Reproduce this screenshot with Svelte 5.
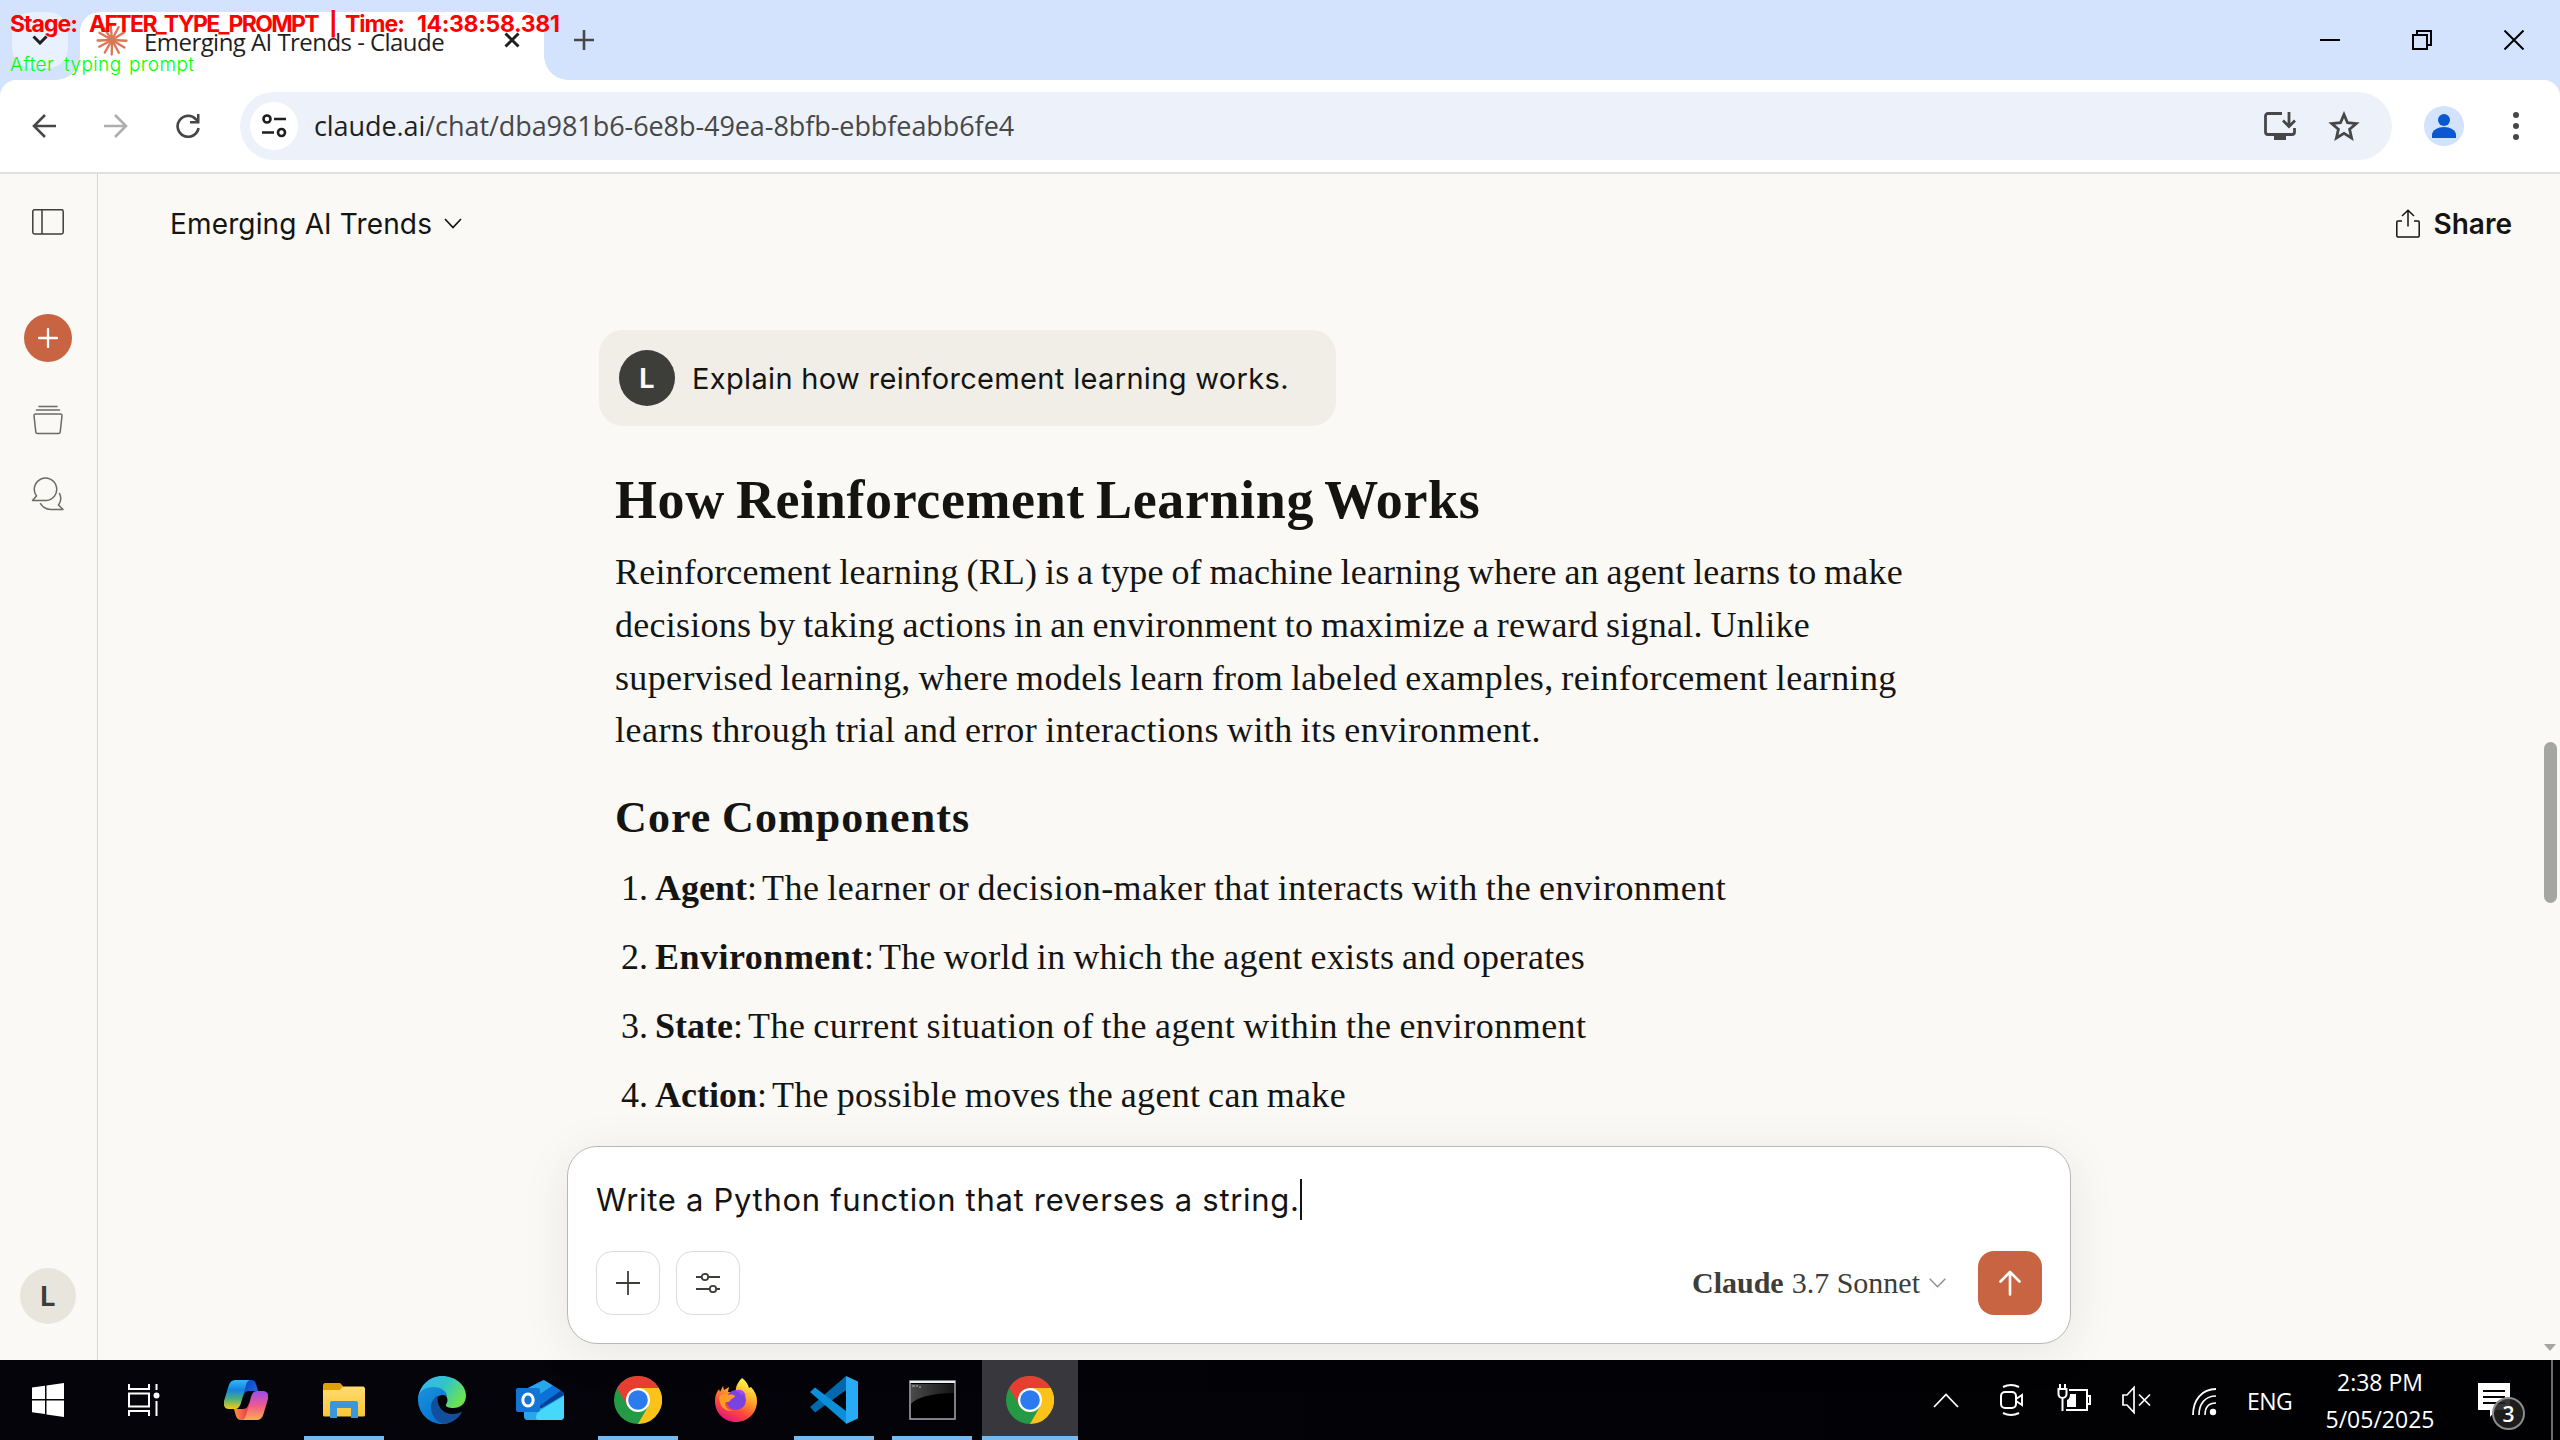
<script>
  const paragraph = [
    'Reinforcement learning (RL) is a type of machine learning where an agent learns to make',
    'decisions by taking actions in an environment to maximize a reward signal. Unlike',
    'supervised learning, where models learn from labeled examples, reinforcement learning',
    'learns through trial and error interactions with its environment.'
  ];
  const components = [
    { term: 'Agent', text: 'The learner or decision-maker that interacts with the environment' },
    { term: 'Environment', text: 'The world in which the agent exists and operates' },
    { term: 'State', text: 'The current situation of the agent within the environment' },
    { term: 'Action', text: 'The possible moves the agent can make' }
  ];
  const rays = [3, 31, 62, 91, 120, 152, 178, 210, 236, 265, 297, 328].map((d) => (d * Math.PI) / 180);
</script>

{#snippet chrome()}
  <svg class="app-icon" viewBox="0 0 48 48">
    <circle cx="24" cy="24" r="24" fill="#249a45" />
    <path d="M24 24 3.200 12A24 24 0 0 1 44.800 12Z" fill="#e63e31" />
    <path d="M24 12H44.800A24 24 0 0 1 24 48L34.400 30Z" fill="#fdc21a" />
    <path d="M3.200 12 13.600 30 24 24V12Z" fill="#e63e31" />
    <circle cx="24" cy="24" r="12" fill="#fff" />
    <circle cx="24" cy="24" r="9.800" fill="#2b7aee" />
  </svg>
{/snippet}

<div class="screen">
  <div class="tabstrip">
    <div class="tab-search">
      <svg width="16" height="10" viewBox="0 0 16 10"><path d="M1.500 1.500 8 8l6.500-6.500" fill="none" stroke="#1f1f1f" stroke-width="3" /></svg>
    </div>
    <div class="tab">
      <svg class="spark" width="32" height="32" viewBox="-16 -16 32 32">
        <g stroke="#d97757" stroke-width="2.300" stroke-linecap="round">
          {#each rays as a}
            <line x1="0" y1="0" x2={14.5 * Math.cos(a)} y2={14.5 * Math.sin(a)} />
          {/each}
        </g>
        <circle r="4.500" fill="#d97757" />
      </svg>
      <span class="tab-title">Emerging AI Trends - Claude</span>
      <svg class="tab-close" width="16" height="16" viewBox="0 0 16 16"><path d="M1.500 1.500l13 13M14.500 1.500l-13 13" stroke="#1f1f1f" stroke-width="3" /></svg>
    </div>
    <svg class="new-tab" width="20" height="20" viewBox="0 0 20 20"><path d="M10 0v20M0 10h20" stroke="#474747" stroke-width="2.600" /></svg>
    <div class="window-controls">
      <svg width="20" height="20" viewBox="0 0 20 20"><path d="M0 10h20" stroke="#000" stroke-width="2" /></svg>
      <svg width="20" height="20" viewBox="0 0 20 20"><path d="M1 5h14v14H1zM5 5V1h14v14h-4" fill="none" stroke="#000" stroke-width="2" /></svg>
      <svg width="20" height="20" viewBox="0 0 20 20"><path d="M.5.5l19 19M19.500.5l-19 19" stroke="#000" stroke-width="2" /></svg>
    </div>
  </div>

  <div class="toolbar-wrap">
    <div class="toolbar">
      <svg class="nav" width="24" height="24" viewBox="0 0 24 24"><path d="M13 1 2 12l11 11M2 12h22" fill="none" stroke="#474747" stroke-width="2.600" /></svg>
      <svg class="nav" width="24" height="24" viewBox="0 0 24 24"><path d="M11 1l11 11-11 11M22 12H0" fill="none" stroke="#aeaeae" stroke-width="2.600" /></svg>
      <svg class="nav" width="24" height="24" viewBox="0 0 24 24"><path d="M22.500 14A10.500 10.500 0 1 1 20 5.300L22 8" fill="none" stroke="#474747" stroke-width="2.700" /><path d="M23.500 0v9.500H14V7h7V0z" fill="#474747" /></svg>
      <div class="omnibox">
        <div class="site-info">
          <svg width="26" height="24" viewBox="0 0 26 24"><g fill="none" stroke="#1f1f1f" stroke-width="2.600"><circle cx="6" cy="5" r="3.500" /><path d="M13 5h12M1 18.500h12" /><circle cx="20.500" cy="18.500" r="3.500" /></g></svg>
        </div>
        <span class="url"><b>claude.ai</b>/chat/dba981b6-6e8b-49ea-8bfb-ebbfeabb6fe4</span>
        <svg class="install" width="32" height="28" viewBox="0 0 32 28"><path d="M18 1.500H4A2.500 2.500 0 0 0 1.500 4v16A2.500 2.500 0 0 0 4 22.500h24a2.500 2.500 0 0 0 2.500-2.500v-4M25 0v14M19 8.500l6 6 6-6" fill="none" stroke="#474747" stroke-width="2.800" /><path d="M10 22h12v6H10z" fill="#474747" /></svg>
        <svg class="star" width="32" height="30" viewBox="0 0 32 30"><path d="M16 3.500l3.500 8.200 8.800.8-6.700 5.800 2 8.700-7.600-4.600-7.600 4.600 2-8.700-6.700-5.800 8.800-.8z" fill="none" stroke="#474747" stroke-width="2.800" /></svg>
      </div>
      <svg class="profile" width="40" height="40" viewBox="0 0 40 40"><circle cx="20" cy="20" r="20" fill="#d3e3fd" /><circle cx="20" cy="14" r="6" fill="#0b57d0" /><path d="M8 32v-3c0-5 6-8 12-8s12 3 12 8v3z" fill="#0b57d0" /></svg>
      <svg class="dots" width="8" height="30" viewBox="0 0 8 30"><circle cx="4" cy="4" r="3" /><circle cx="4" cy="15" r="3" /><circle cx="4" cy="26" r="3" /></svg>
    </div>
  </div>

  <div class="page">
    <nav class="sidebar">
      <svg class="panel" width="32" height="26" viewBox="0 0 32 26"><path d="M2.500.8h27a1.700 1.700 0 0 1 1.700 1.700v20.800a1.700 1.700 0 0 1-1.700 1.700h-27a1.700 1.700 0 0 1-1.700-1.700V2.500A1.700 1.700 0 0 1 2.500.8zM10 .8V25" fill="none" stroke="#3d3d3a" stroke-width="1.500" /></svg>
      <div class="new-chat"><svg width="20" height="20" viewBox="0 0 20 20"><path d="M10 1v18M1 10h18" stroke="#fff" stroke-width="2.300" stroke-linecap="round" /></svg></div>
      <svg class="projects" width="30" height="30" viewBox="0 0 30 30"><path d="M6 1.500h18M3.500 5h23M2.500 9h25a1.500 1.500 0 0 1 1.500 1.700l-1.800 16.400A1.800 1.800 0 0 1 25.500 28.500h-21A1.800 1.800 0 0 1 2.800 27.100L1 10.700A1.500 1.500 0 0 1 2.500 9z" fill="none" stroke="#6b6a65" stroke-width="1.500" stroke-linecap="round" /></svg>
      <svg class="chats" width="34" height="34" viewBox="0 0 34 34"><path d="M1.500 23.500 5.500 19A11.200 11.200 0 1 1 15.300 23.500zM28.500 16.500c2 4 1.500 8-1 11.500l4.500 4.500H20c-4.500 0-8-2-10.500-5.800" fill="none" stroke="#6b6a65" stroke-width="1.500" stroke-linejoin="round" stroke-linecap="round" /></svg>
      <div class="avatar account">L</div>
    </nav>

    <main>
      <header>
        <span class="title">Emerging AI Trends</span>
        <svg class="title-chevron" width="18" height="11" viewBox="0 0 18 11"><path d="M1 1l8 8.500L17 1" fill="none" stroke="#141413" stroke-width="1.700" /></svg>
        <svg class="share-icon" width="24" height="29" viewBox="0 0 24 29"><path d="M6 12H2a1.200 1.200 0 0 0-1.200 1.200v13.600A1.200 1.200 0 0 0 2 28h20a1.200 1.200 0 0 0 1.200-1.200V13.200A1.200 1.200 0 0 0 22 12h-4M12 17.500V1.500M6 7l6-5.700L18 7" fill="none" stroke="#141413" stroke-width="1.500" /></svg>
        <span class="share">Share</span>
      </header>

      <section class="thread">
        <div class="bubble">
          <div class="avatar user">L</div>
          <span class="question">Explain how reinforcement learning works.</span>
        </div>
        <article>
          <h2>How Reinforcement Learning Works</h2>
          <p>{#each paragraph as line}<span>{line}</span>{/each}</p>
          <h3>Core Components</h3>
          <ol>
            {#each components as c, i}
              <li><span class="num">{i + 1}.</span><b>{c.term}</b><span class="colon">:</span><span class="desc">{c.text}</span></li>
            {/each}
          </ol>
        </article>
      </section>

      <div class="composer">
        <div class="prompt"><span>Write a Python function that reverses a string.</span><i class="caret"></i></div>
        <div class="actions">
          <div class="tool"><svg width="24" height="24" viewBox="0 0 24 24"><path d="M12 0v24M0 12h24" stroke="#3d3d3a" stroke-width="1.800" /></svg></div>
          <div class="tool"><svg width="24" height="20" viewBox="0 0 24 20"><g fill="none" stroke="#3d3d3a" stroke-width="1.800"><path d="M0 4h5.500M12.500 4H24M0 16h13.500M20.500 16H24" /><circle cx="9" cy="4" r="3.200" /><circle cx="17" cy="16" r="3.200" /></g></svg></div>
          <div class="model"><b>Claude</b><span>3.7 Sonnet</span></div>
          <svg class="model-chevron" width="17" height="10" viewBox="0 0 17 10"><path d="M.7.8l7.800 8L16.300.8" fill="none" stroke="#8f8e88" stroke-width="1.400" /></svg>
          <div class="send"><svg width="22" height="26" viewBox="0 0 22 26"><path d="M11 24.500V2M1.500 11.500 11 2l9.500 9.500" fill="none" stroke="#fff" stroke-width="2.600" stroke-linecap="round" stroke-linejoin="round" /></svg></div>
        </div>
      </div>
    </main>

    <div class="scrollbar">
      <div class="thumb"></div>
      <svg width="12" height="7" viewBox="0 0 12 7"><path d="M0 0h12L6 7z" fill="#a5a5a2" /></svg>
    </div>
  </div>

  <footer class="taskbar">
    <div class="slot start"><svg width="32" height="34" viewBox="0 0 32 34"><path d="M0 4.600 13 2.800V16H0zM14.500 2.600 32 0v16H14.500zM0 17.500h13v13.400L0 29.200zM14.500 17.500H32V34l-17.500-2.600z" fill="#fff" /></svg></div>
    <div class="slot view"><svg width="32" height="32" viewBox="0 0 32 32"><g fill="none" stroke="#fff" stroke-width="2"><path d="M1 0v5h20V0M1 32v-5h20v5M1 9.500h20v13H1zM28.500 0v6M28.500 17v15" /></g><circle cx="28.500" cy="11.500" r="3" fill="#fff" /></svg></div>
    <div class="slot">
      <svg width="44" height="40" viewBox="0 0 44 40">
        <defs>
          <linearGradient id="cpa" x1="0" y1="0" x2="0" y2="1"><stop offset="0" stop-color="#2fb9f6" /><stop offset=".35" stop-color="#1683e0" /><stop offset=".65" stop-color="#4cb07a" /><stop offset="1" stop-color="#f8cb14" /></linearGradient>
          <linearGradient id="cpb" x1="0" y1="0" x2="0" y2="1"><stop offset="0" stop-color="#9a4df0" /><stop offset=".5" stop-color="#ef5a8e" /><stop offset="1" stop-color="#ffad4d" /></linearGradient>
          <linearGradient id="cpc" x1="0" y1="0" x2="1" y2="1"><stop offset="0" stop-color="#0b3fc0" /><stop offset="1" stop-color="#2170e4" /></linearGradient>
          <linearGradient id="cpd" x1="0" y1="0" x2="1" y2="0"><stop offset="0" stop-color="#ff9440" /><stop offset="1" stop-color="#e8324e" /></linearGradient>
        </defs>
        <path d="M20 0h7c3 0 4.500 2 5.200 4.500L34 11h-9c-4 0-5 3-6 6z" fill="url(#cpc)" />
        <path d="M24 40h-7c-3 0-4.500-2-5.200-4.500L10 29h9c4 0 5-3 6-6z" fill="url(#cpd)" />
        <path d="M11 0h16c-3 0-4.200 2-5 5l-5 18c-1.300 4-3 6-6 6H5c-4 0-6-3-5-8L4.500 6C5.700 2 8 0 11 0z" fill="url(#cpa)" />
        <path d="M33 40H17c3 0 4.200-2 5-5l5-18c1.300-4 3-6 6-6h6c4 0 6 3 5 8l-4.500 15c-1.200 4-3.500 6-6.500 6z" fill="url(#cpb)" />
      </svg>
    </div>
    <div class="slot open">
      <svg width="42" height="35" viewBox="0 0 42 35">
        <defs><linearGradient id="fo" x1="0" y1="0" x2="0" y2="1"><stop offset="0" stop-color="#ffdb70" /><stop offset="1" stop-color="#fac637" /></linearGradient></defs>
        <path d="M1.500 0H17l3 3v5H0V1.500z" fill="#e0a000" />
        <path d="M0 7h17l3-3.500h20.500L42 5v27a1.500 1.500 0 0 1-1.500 1.500h-39A1.500 1.500 0 0 1 0 32z" fill="url(#fo)" />
        <path d="M7 35V20a2 2 0 0 1 2-2h24a2 2 0 0 1 2 2v15h-7V25H14v10z" fill="#3a96dd" />
      </svg>
    </div>
    <div class="slot">
      <svg class="app-icon" viewBox="0 0 48 48">
        <defs>
          <linearGradient id="ea" x1="0" y1="0" x2="1" y2=".5"><stop offset=".1" stop-color="#36b4f4" /><stop offset=".55" stop-color="#30c5c8" /><stop offset="1" stop-color="#6ce154" /></linearGradient>
          <linearGradient id="eb" x1="0" y1="0" x2=".6" y2="1"><stop offset="0" stop-color="#1b93de" /><stop offset="1" stop-color="#0472cf" /></linearGradient>
        </defs>
        <path d="M0 23C1 10 11 0 24 0c14 0 24 9.500 24 19.500C48 28 42 32 35.500 32c-5 0-8.500-1.500-7.500-3.500 4-5 0-13-9-13C9 15.500 1 18 0 23z" fill="url(#ea)" />
        <path d="M0 24C0 15 7 11 15 11c9 0 14 5 14 9-6-3-13 0-13 9 0 8 6 16 14 18.200A24 24 0 0 1 0 24z" fill="url(#eb)" />
        <path d="M20 19.500c-2 9 4 18.500 14.500 18.500 4 0 7-1.300 9.500-2.200C42 41 35 47.500 26 48 18 46 13 39 13 31c0-5 3-9.500 7-11.500z" fill="#114f9c" />
      </svg>
    </div>
    <div class="slot">
      <svg class="app-icon" viewBox="0 0 48 48">
        <path d="M8 14 27 4l21 13v23a4 4 0 0 1-4 4H12a4 4 0 0 1-4-4z" fill="#0a62c8" />
        <path d="M8 14 28 4l9 5.500L14 25z" fill="#28a8ea" />
        <path d="M14 25 37 9.500l8 5L22 31z" fill="#0a72d8" />
        <path d="M22 31 45 14.500q3 1.500 3 5L24 34z" fill="#04409a" />
        <path d="M8 36 26 32l22-13v21a4 4 0 0 1-4 4H12a4 4 0 0 1-4-4z" fill="#28a8ea" />
        <path d="M20 41c0-3 2-5 5-7l23-14v20a4 4 0 0 1-4 4H23q-3 0-3-3z" fill="#45d8fa" />
        <rect y="12" width="24" height="24" rx="2" fill="#1275d6" />
        <ellipse cx="12" cy="24" rx="5.200" ry="6" fill="none" stroke="#fff" stroke-width="3" />
      </svg>
    </div>
    <div class="slot open">{@render chrome()}</div>
    <div class="slot">
      <svg width="42" height="44" viewBox="0 0 42 44">
        <defs><linearGradient id="ff" x1=".8" y1="0" x2=".3" y2="1"><stop offset=".1" stop-color="#fff04a" /><stop offset=".4" stop-color="#ffa62b" /><stop offset=".7" stop-color="#ff4a3a" /><stop offset="1" stop-color="#e5127f" /></linearGradient></defs>
        <path d="M27 0c4 3 6 6 7 10l2-1c4 4 6 9 6 14 0 12-9 21-21 21S0 35 0 23c0-6 2-9 4-12l1 3 3-6 1 4 5-3-1 5 8 0c-1-6 3-11 6-14z" fill="url(#ff)" />
        <circle cx="21" cy="22" r="10" fill="#7a42e0" />
        <path d="M19 13c6-3 11 0 12 5-2-2-4-2-5-1-2-3-4-4-7-4z" fill="#a34bf0" />
        <path d="M4 19c2-3 6-4 9-2 3-1 6 0 7 1 0 2-4 2-5 5-2 2-4 0-5 2 0 4 3 7 8 8-8 1-14-5-14-14z" fill="#ff9a26" />
      </svg>
    </div>
    <div class="slot open">
      <svg class="app-icon" viewBox="0 0 48 48">
        <path d="M0 31 36 0v14L5 36.500z" fill="#0268ae" />
        <path d="M0 16 5 11.500 36 35v12.500z" fill="#0b8fdb" />
        <path d="M36 0l12 5.500v37L36 48z" fill="#29aaf5" />
      </svg>
    </div>
    <div class="slot open">
      <svg width="47" height="40" viewBox="0 0 47 40">
        <defs><linearGradient id="cm" x1="0" y1="0" x2="1" y2="0"><stop offset="0" stop-color="#4a4a4a" /><stop offset="1" stop-color="#141414" /></linearGradient></defs>
        <path d="M1 1h45v38H1z" fill="#000" stroke="#a7abb2" stroke-width="1.500" />
        <path d="M2 4h43v9C25 13 8 17 2 24z" fill="url(#cm)" />
        <path d="M1 1h45v2H1z" fill="#eceef0" />
        <path d="M3 6h3M7 6h2M10 7h2" stroke="#bbb" />
      </svg>
    </div>
    <div class="slot open active">{@render chrome()}</div>

    <div class="tray">
      <svg class="t-up" width="26" height="15" viewBox="0 0 26 15"><path d="M1 14 13 1.500 25 14" fill="none" stroke="#fff" stroke-width="1.800" /></svg>
      <svg class="t-meet" width="24" height="34" viewBox="0 0 24 34"><g fill="none" stroke="#fff" stroke-width="2"><rect x="1" y="9" width="15" height="16" rx="4" /><path d="M16 16l6-4v10l-6-4M3 4q8-4 16 0M3 30q8 4 16 0" /></g></svg>
      <svg class="t-batt" width="34" height="28" viewBox="0 0 34 28"><g fill="none" stroke="#fff" stroke-width="2"><path d="M12 6h18v20H9M31 12h2v8h-2M3 0v5M8 0v5M1.500 5h8v5a4 4 0 0 1-8 0zM5.500 14v13" /></g><path d="M13 10h6v13H10v-7q3-1 3-6z" fill="#fff" /></svg>
      <svg class="t-vol" width="30" height="28" viewBox="0 0 30 28"><path d="M1 9h4l7-7.500v25L5 19H1zM17 8.500l11 11M28 8.500l-11 11" fill="none" stroke="#fff" stroke-width="1.700" /></svg>
      <svg class="t-wifi" width="26" height="28" viewBox="0 0 26 28"><g fill="none" stroke="#fff" stroke-width="1.800"><path d="M1 27C1 12 10 1 24 1" /><path d="M7 27C7 16 13 8 24 8M13 27c0-8 4-12 11-12" stroke-width="1.600" /></g><circle cx="21" cy="24" r="3.200" fill="#fff" /></svg>
      <span class="lang">ENG</span>
      <div class="clock"><span>2:38 PM</span><span>5/05/2025</span></div>
      <div class="notify">
        <svg width="32" height="34" viewBox="0 0 32 34"><path d="M0 0h32v27H18l-6 7v-7H0z" fill="#fff" /><path d="M5 8h22M5 14h22M5 20h22" stroke="#000" stroke-width="2" /></svg>
        <div class="badge">3</div>
      </div>
      <div class="peek"></div>
    </div>
  </footer>

  <div class="overlay">
    <div class="stage"><span>Stage:</span><span class="name">AFTER_TYPE_PROMPT</span><span>|</span><span>Time:</span><span class="time">14:38:58.381</span></div>
    <div class="note"><span>After</span><span>typing</span><span>prompt</span></div>
  </div>
</div>

<style>
  :global(body) { overflow: hidden; }
  .screen { position: relative; width: 2560px; height: 1440px; display: flex; flex-direction: column; font-family: Inter, sans-serif; color: #141413; white-space: nowrap; overflow: hidden; }
  .screen svg { display: block; flex: none; }
  .screen * { box-sizing: border-box; }

  /* browser chrome */
  .tabstrip { height: 80px; flex: none; background: #d3e3fd; display: flex; align-items: center; font-family: 'Open Sans', sans-serif; }
  .tab-search { width: 56px; height: 56px; margin-left: 12px; border-radius: 20px; background: #e9f1fe; display: grid; place-items: center; }
  .tab { position: relative; width: 464px; height: 68px; margin: 12px 0 0 12px; background: #fff; border-radius: 20px 20px 0 0; display: flex; align-items: center; padding: 0 24px 12px 16px; }
  .tab::before, .tab::after { content: ''; position: absolute; bottom: 0; width: 24px; height: 24px; }
  .tab::before { left: -24px; background: radial-gradient(circle at 0 0, transparent 23.5px, #fff 24px); }
  .tab::after { right: -24px; background: radial-gradient(circle at 100% 0, transparent 23.5px, #fff 24px); }
  .tab-title { font-size: 24px; letter-spacing: -.55px; margin-left: 16px; padding-top: 2px; color: #1f1f1f; }
  .tab-close { margin-left: auto; }
  .new-tab { margin-left: 30px; }
  .window-controls { margin: 0 36px 0 auto; display: flex; gap: 72px; }

  .toolbar-wrap { height: 94px; flex: none; background: #d3e3fd; }
  .toolbar { height: 94px; background: #fff; border-bottom: 2px solid #e0e0e0; border-radius: 16px 16px 0 0; display: flex; align-items: center; padding: 0 40px 0 32px; }
  .nav { margin-right: 48px; }
  .omnibox { width: 2152px; height: 68px; border-radius: 34px; margin-left: -8px; background: #ecf1fa; display: flex; align-items: center; padding: 0 32px 0 10px; }
  .site-info { width: 48px; height: 48px; border-radius: 50%; background: #fff; display: grid; place-items: center; }
  .url { font: 27px 'Open Sans', sans-serif; letter-spacing: -.07px; margin-left: 16px; padding-bottom: 2px; color: #474747; }
  .url b { font-weight: 400; color: #1f1f1f; }
  .install { margin-left: auto; }
  .star { margin-left: 32px; }
  .profile { margin-left: 32px; }
  .dots { margin-left: auto; fill: #474747; }

  /* chat page */
  .page { position: relative; height: 1186px; flex: none; display: flex; background: #faf9f5; }
  .sidebar { width: 98px; border-right: 1px solid #d6d5d0; display: flex; flex-direction: column; align-items: center; padding: 35px 1px 36px 0; }
  .new-chat { width: 48px; height: 48px; border-radius: 50%; background: #c96442; margin-top: 79px; display: grid; place-items: center; }
  .projects { margin-top: 43px; }
  .chats { margin-top: 42px; }
  .avatar { width: 56px; height: 56px; border-radius: 50%; display: grid; place-items: center; font-weight: 700; font-size: 27px; }
  .account { margin-top: auto; background: #e8e6dc; color: #3d3d3a; }

  main { flex: 1; display: flex; flex-direction: column; padding-bottom: 16px; min-width: 0; }
  header { height: 97px; flex: none; display: flex; align-items: center; padding: 1px 30px 0 72px; font-size: 28px; }
  .title { letter-spacing: .15px; padding-top: 1px; }
  .title-chevron { margin-left: 12px; }
  .share-icon { margin-left: auto; }
  .share { font-weight: 600; margin-left: 14px; padding-top: 1px; }

  .thread { flex: 1; min-height: 0; padding: 59px 0 0 501px; }
  .bubble { width: 737px; height: 96px; border-radius: 24px; background: #f0eee6; display: flex; align-items: center; padding-left: 20px; }
  .user { background: #3d3d3a; color: #faf9f5; }
  .question { font-size: 29px; letter-spacing: .34px; margin-left: 17px; }
  article { padding-left: 16px; font: 36px/52.800px 'Liberation Serif', serif; word-spacing: -1.5px; }
  h2 { margin: 44px 0 0; font: 700 54px/60px 'Liberation Serif', serif; letter-spacing: .62px; word-spacing: -3px; }
  p { margin: 16px 0 0; }
  p span { display: block; letter-spacing: .2px; }
  p span:nth-child(2) { letter-spacing: .25px; }
  p span:nth-child(3) { letter-spacing: .36px; }
  p span:nth-child(4) { letter-spacing: .48px; }
  h3 { margin: 36px 0 0; font: 700 44px/50px 'Liberation Serif', serif; letter-spacing: 1.1px; }
  ol { list-style: none; margin: 18.500px 0 0; padding: 0; display: flex; flex-direction: column; gap: 16.200px; }
  li { display: flex; }
  .num { width: 40px; padding-left: 6px; }
  .colon { width: 10px; }
  .desc { margin-left: 5px; letter-spacing: .47px; }
  li:nth-child(2) b { letter-spacing: .5px; }
  li:nth-child(even) .desc { letter-spacing: .3px; }

  .composer { width: 1504px; height: 198px; flex: none; margin-left: 469px; background: #fff; border: 1px solid #b9b8b4; border-radius: 30px; box-shadow: 0 8px 50px rgba(0, 0, 0, .08); padding: 32px 28px 28px; display: flex; flex-direction: column; justify-content: space-between; }
  .prompt { display: flex; align-items: center; font-size: 31px; line-height: 40px; letter-spacing: .7px; }
  .caret { width: 2px; height: 41px; background: #141413; }
  .actions { display: flex; align-items: center; }
  .tool { width: 64px; height: 64px; border: 1px solid #dddcd7; border-radius: 16px; margin-right: 16px; display: grid; place-items: center; }
  .model { margin-left: auto; display: flex; gap: 8px; font: 30px 'Liberation Serif', serif; color: #3d3d3a; }
  .model-chevron { margin-left: 9px; }
  .send { width: 64px; height: 64px; border-radius: 16px; margin-left: 32px; background: #c96442; display: grid; place-items: center; }

  .scrollbar { width: 18px; flex: none; display: flex; flex-direction: column; justify-content: space-between; padding: 568px 0 9px 2px; }
  .thumb { width: 13px; height: 161px; border-radius: 7px; background: #a5a5a2; }

  /* taskbar */
  .taskbar { height: 80px; flex: none; background: linear-gradient(90deg, #05040b, #030206 60%, #010103); display: flex; color: #fff; font-family: 'Open Sans', sans-serif; }
  .slot { position: relative; width: 98px; height: 80px; display: grid; place-items: center; }
  .start { width: 96px; }
  .view { width: 96px; margin-right: 5px; }
  .open::after { content: ''; position: absolute; left: 9px; right: 9px; bottom: 0; height: 4px; background: #76b9ed; }
  .active { background: linear-gradient(#38373d, #38373d) 1px 0 / 96px 100% no-repeat; }
  .active::after { left: 1px; right: 1px; }
  .app-icon { width: 48px; height: 48px; }
  .tray { display: flex; align-items: center; margin-left: auto; padding-right: 7px; font-size: 23px; }
  .t-meet { margin-left: 41px; }
  .t-batt { margin-left: 33px; margin-top: -4px; }
  .t-vol { margin-left: 31px; }
  .t-wifi { margin-left: 40px; margin-top: 4px; }
  .lang { width: 45px; margin-left: 29px; margin-right: 1px; letter-spacing: -.6px; padding-top: 2px; }
  .clock { width: 120px; margin-left: 27px; display: flex; flex-direction: column; align-items: center; line-height: 37px; padding-top: 1px; }
  .notify { position: relative; margin-left: 38px; }
  .badge { position: absolute; left: 14px; top: 14px; width: 33px; height: 33px; border-radius: 50%; border: 2px solid #8c8c8c; background: rgba(32, 32, 32, .9); display: grid; place-items: center; font-size: 21px; font-weight: 600; line-height: 28px; }
  .peek { width: 2px; height: 80px; margin-left: 41px; background: #6b6b6e; }

  /* stage annotation drawn over the window */
  .overlay { position: absolute; left: 10px; top: 10px; }
  .stage { display: grid; grid-template-columns: 79px 240px 16px 72px auto; font-size: 23px; line-height: 28px; font-weight: 700; color: #f00; letter-spacing: -1px; }
  .name { letter-spacing: -1.65px; }
  .stage .time { letter-spacing: -.35px; }
  .note { display: grid; grid-template-columns: 54px 65px auto; margin-top: 14px; font-size: 19px; line-height: 26px; font-weight: 300; letter-spacing: .4px; color: #0f0; }
</style>
